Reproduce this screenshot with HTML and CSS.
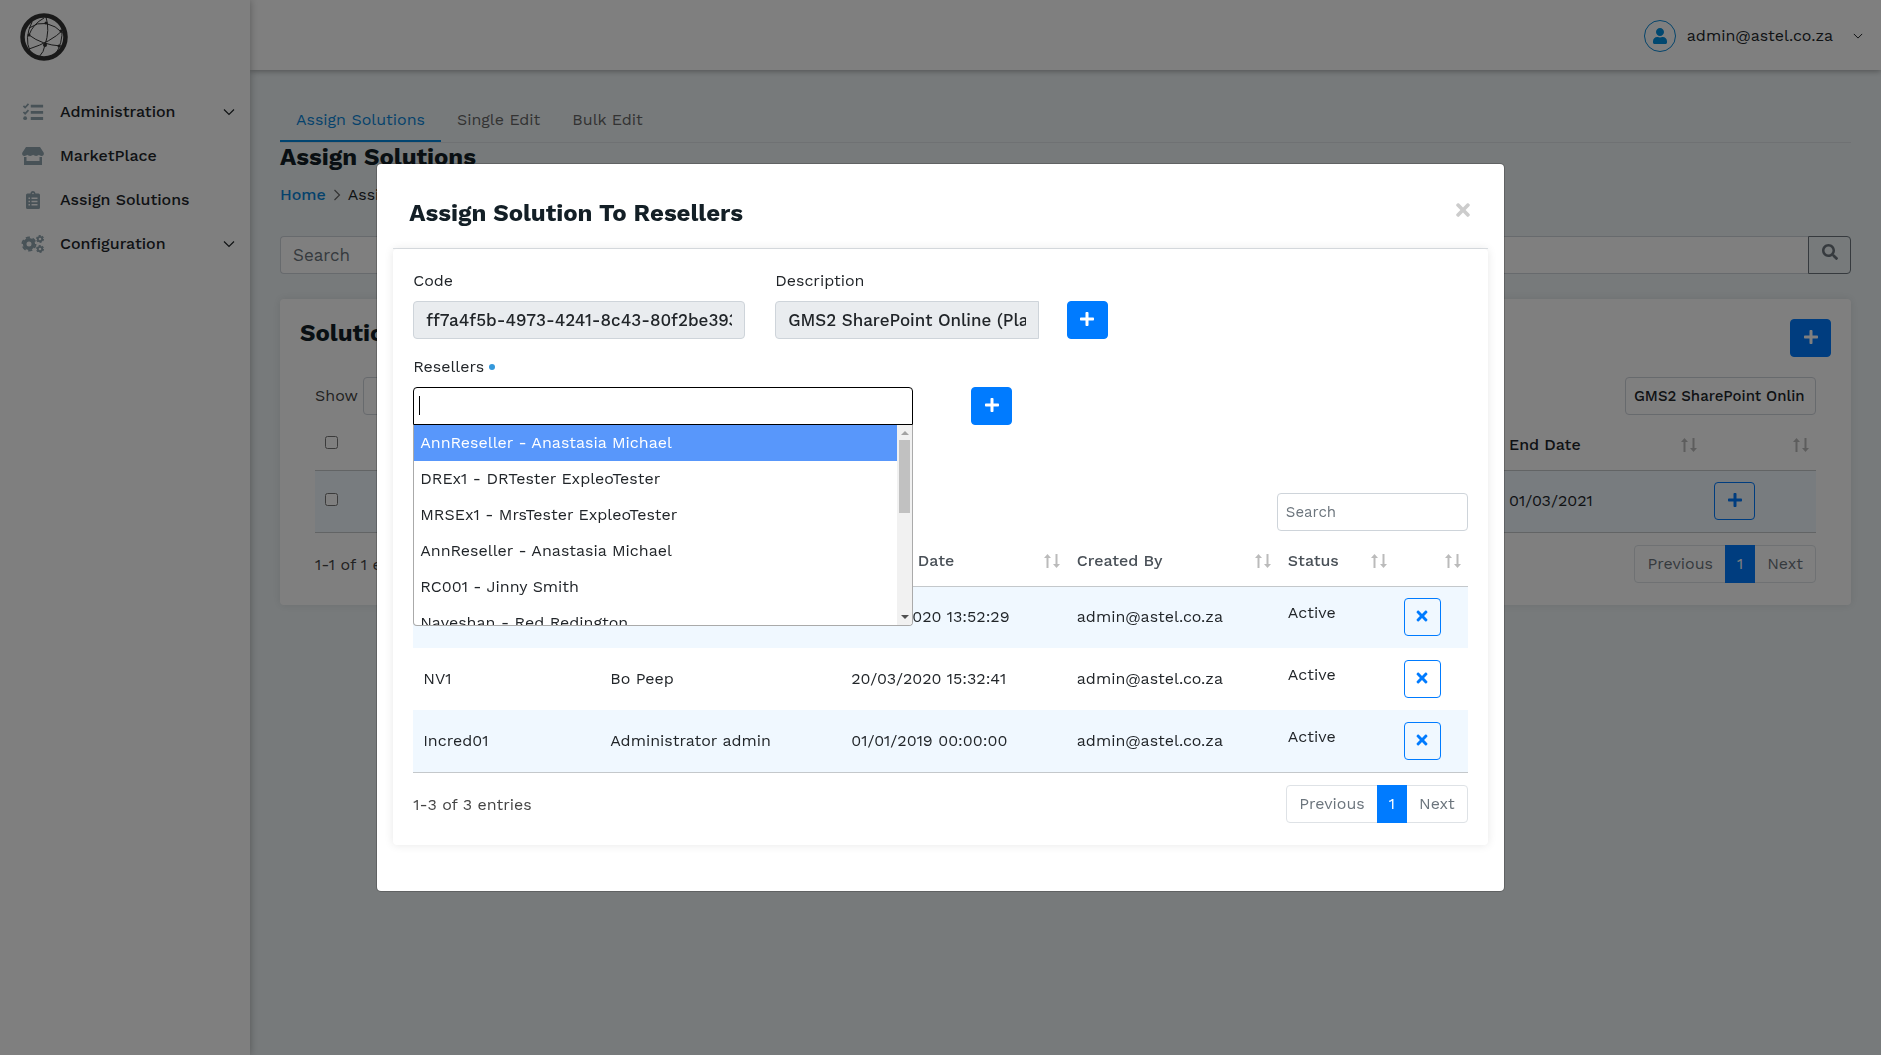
FILE: index.html
```html
<!DOCTYPE html>
<html lang="en">
<head>
<meta charset="utf-8">
<meta name="viewport" content="width=device-width, initial-scale=1">
<title>Assign Solutions</title>
<link rel="stylesheet" href="styles.css">
</head>
<body>
<svg class="sprite" aria-hidden="true">
  <symbol id="plus" viewBox="0 0 448 512"><path d="M416 208H272V64c0-17.67-14.33-32-32-32h-32c-17.67 0-32 14.33-32 32v144H32c-17.67 0-32 14.33-32 32v32c0 17.67 14.33 32 32 32h144v144c0 17.67 14.33 32 32 32h32c17.67 0 32-14.33 32-32V304h144c17.67 0 32-14.33 32-32v-32c0-17.67-14.33-32-32-32z"/></symbol>
  <symbol id="times" viewBox="0 0 352 512"><path d="M242.72 256l100.07-100.07c12.28-12.28 12.28-32.19 0-44.48l-22.24-22.24c-12.28-12.28-32.19-12.28-44.48 0L176 189.28 75.93 89.21c-12.28-12.28-32.19-12.28-44.48 0L9.21 111.45c-12.28 12.28-12.28 32.19 0 44.48L109.28 256 9.21 356.07c-12.28 12.28-12.28 32.19 0 44.48l22.24 22.24c12.28 12.28 32.2 12.28 44.48 0L176 322.72l100.07 100.07c12.28 12.28 32.2 12.28 44.48 0l22.24-22.24c12.28-12.28 12.28-32.19 0-44.48L242.72 256z"/></symbol>
  <symbol id="user" viewBox="0 0 448 512"><path d="M224 256c70.7 0 128-57.3 128-128S294.7 0 224 0 96 57.3 96 128s57.3 128 128 128zm89.6 32h-16.7c-22.2 10.2-46.9 16-72.9 16s-50.6-5.8-72.9-16h-16.7C60.2 288 0 348.2 0 422.4V464c0 26.5 21.5 48 48 48h352c26.5 0 48-21.5 48-48v-41.6c0-74.2-60.2-134.4-134.4-134.4z"/></symbol>
  <symbol id="search" viewBox="0 0 512 512"><path d="M505 442.7L405.3 343c-4.5-4.5-10.6-7-17-7H372c27.6-35.3 44-79.7 44-128C416 93.1 322.9 0 208 0S0 93.1 0 208s93.1 208 208 208c48.3 0 92.7-16.4 128-44v16.3c0 6.4 2.5 12.5 7 17l99.7 99.7c9.4 9.4 24.6 9.4 33.9 0l28.3-28.3c9.4-9.4 9.4-24.6.1-34zM208 336c-70.7 0-128-57.2-128-128 0-70.7 57.2-128 128-128 70.7 0 128 57.2 128 128 0 70.7-57.2 128-128 128z"/></symbol>
  <symbol id="chevron" viewBox="0 0 12 12"><path d="M1 3.500L6 8.500l5-5" fill="none" stroke="currentColor" stroke-width="1.200"/></symbol>
  <symbol id="sort" viewBox="0 0 16 14"><path d="M2.500 14V4H0L3.500 0 7 4H4.500v10zM11.500 0v10H9l3.500 4 3.500-4h-2.500V0z"/></symbol>
  <symbol id="tasks" viewBox="0 0 18 16"><path d="M7 1.500h11v2.500H7zM7 7h11v2.500H7zM7 12.500h11V15H7z"/><circle cx="2" cy="13.500" r="1.700"/><path d="M.5 2.500L2 4l3-3.200M.5 8L2 9.500l3-3.200" fill="none" stroke="currentColor" stroke-width="1.500"/></symbol>
  <symbol id="store" viewBox="0 0 22 18"><path d="M4 0h14l3.600 5.500c.9 1.800-.3 3.500-2.100 3.500-1.200 0-2-.5-2.600-1.200-.6.700-1.500 1.200-2.800 1.200-1.300 0-2.300-.5-3-1.200C10.400 8.500 9.400 9 8.200 9c-1.300 0-2.300-.5-2.900-1.200C4.600 8.500 3.700 9 2.500 9 .7 9-.5 7.300.4 5.500zM2 10h2.500v4h13v-4H20v8H2z"/></symbol>
  <symbol id="clipboard" viewBox="0 0 14 18"><path fill-rule="evenodd" d="M1.500 2.500h3a2.500 2.500 0 015 0h3A1.500 1.500 0 0114 4v12.500a1.500 1.500 0 01-1.500 1.500h-11A1.500 1.500 0 010 16.500V4a1.500 1.500 0 011.500-1.500zM7 1.700a.8.800 0 100 1.600.8.800 0 000-1.600zM2.500 6.500V8H4V6.500zm3 0V8h6V6.500zm-3 3.200v1.500H4V9.700zm3 0v1.500h6V9.700zm-3 3.300v1.500H4V13zm3 0v1.500h6V13z"/></symbol>
  <symbol id="cogs" viewBox="0 0 23 18"><g fill="none" stroke="currentColor"><circle cx="7.500" cy="9" r="4.300" stroke-width="3.600"/><circle cx="7.500" cy="9" r="6.600" stroke-width="1.800" stroke-dasharray="4.200 2.711"/><circle cx="18.500" cy="4" r="2.200" stroke-width="1.800"/><circle cx="18.500" cy="4" r="3.400" stroke-width="1.200" stroke-dasharray="2.100 1.460"/><circle cx="18.500" cy="14" r="2.200" stroke-width="1.800"/><circle cx="18.500" cy="14" r="3.400" stroke-width="1.200" stroke-dasharray="2.100 1.460"/></g></symbol>
</svg>

<div class="app">
  <aside class="sidebar">
    <a class="logo" href="#" aria-label="Home">
      <svg viewBox="0 0 48 48" stroke="currentColor"><circle cx="24" cy="24" r="21.500" stroke-width="4.500"/><path d="M9 15Q26 3 44 21M9 22Q22 32 41 33M26 4Q30 17 25 32Q24 39 19 44M9 36Q31 29 43 17M12 9Q4 25 10 38M42 15Q43 30 35 42M9 22Q13 11 24 5" stroke-width="1"/><g fill="currentColor" stroke="none"><circle cx="9" cy="22" r="1.500"/><circle cx="26" cy="10" r="1.500"/><circle cx="25" cy="32" r="2"/><circle cx="41" cy="18" r="1.500"/><circle cx="39" cy="33" r="1.500"/></g></svg>
    </a>
    <nav class="menu">
      <a class="menu-item" href="#"><svg class="menu-icon"><use href="#tasks"/></svg><span>Administration</span><svg class="chevron"><use href="#chevron"/></svg></a>
      <a class="menu-item" href="#"><svg class="menu-icon"><use href="#store"/></svg><span>MarketPlace</span></a>
      <a class="menu-item" href="#"><svg class="menu-icon"><use href="#clipboard"/></svg><span>Assign Solutions</span></a>
      <a class="menu-item" href="#"><svg class="menu-icon"><use href="#cogs"/></svg><span>Configuration</span><svg class="chevron"><use href="#chevron"/></svg></a>
    </nav>
  </aside>
  <div class="page">
    <header class="topbar">
      <button class="account" type="button"><span class="avatar"><svg><use href="#user"/></svg></span><span>admin@astel.co.za</span><svg class="chevron"><use href="#chevron"/></svg></button>
    </header>
    <main class="content">
      <nav class="tabs">
        <a class="tab tab-active" href="#">Assign Solutions</a>
        <a class="tab" href="#">Single Edit</a>
        <a class="tab" href="#">Bulk Edit</a>
      </nav>
      <h1 class="heading">Assign Solutions</h1>
      <nav class="breadcrumb" aria-label="Breadcrumb"><a href="#">Home</a><svg class="crumb-arrow"><use href="#chevron"/></svg><span>Assign Solutions</span></nav>
      <form class="search-bar">
        <input class="field" type="text" placeholder="Search" aria-label="Search">
        <button class="search-button" type="button" aria-label="Search"><svg><use href="#search"/></svg></button>
      </form>
      <section class="card">
        <div class="card-head"><h2 class="heading">Solutions</h2><button class="btn" type="button" aria-label="Add solution"><svg><use href="#plus"/></svg></button></div>
        <div class="card-body">
          <div class="table-tools">
            <label class="page-size">Show <select class="field"><option>10</option></select></label>
            <input class="field filter" type="text" value="GMS2 SharePoint Onlin" aria-label="Filter solutions">
          </div>
          <table class="table solutions">
            <colgroup><col class="s-check"><col><col class="s-end"><col class="s-action"></colgroup>
            <thead><tr><th><input type="checkbox" aria-label="Select all"></th><th></th><th><div class="th">End Date<svg class="sort"><use href="#sort"/></svg></div></th><th><div class="th"><svg class="sort"><use href="#sort"/></svg></div></th></tr></thead>
            <tbody><tr><td><input type="checkbox" aria-label="Select row"></td><td></td><td>01/03/2021</td><td><button class="btn btn-outline" type="button" aria-label="Assign"><svg><use href="#plus"/></svg></button></td></tr></tbody>
          </table>
          <div class="table-foot"><span class="entries">1-1 of 1 entries</span>
            <nav class="pager"><a href="#">Previous</a><a class="current" href="#">1</a><a href="#">Next</a></nav>
          </div>
        </div>
      </section>
    </main>
  </div>
</div>

<div class="backdrop">
  <div class="modal" role="dialog" aria-modal="true" aria-labelledby="modal-title">
    <div class="modal-head">
      <h2 class="heading" id="modal-title">Assign Solution To Resellers</h2>
      <button class="close" type="button" aria-label="Close"><svg><use href="#times"/></svg></button>
    </div>
    <div class="panel">
      <div class="form-row">
        <div class="form-group group-code"><label for="code">Code</label><input class="field" id="code" type="text" readonly value="ff7a4f5b-4973-4241-8c43-80f2be393a1c"></div>
        <div class="form-group group-description"><label for="description">Description</label><input class="field" id="description" type="text" readonly value="GMS2 SharePoint Online (Plan 1)"></div>
        <button class="btn" type="button" aria-label="Choose solution"><svg><use href="#plus"/></svg></button>
      </div>
      <div class="form-row row-resellers">
        <div class="form-group group-resellers">
          <label for="resellers">Resellers<span class="required"></span></label>
          <div class="combo">
            <input class="field" id="resellers" type="text" role="combobox" aria-expanded="true" aria-controls="reseller-list">
            <span class="caret"></span>
            <div class="dropdown">
              <ul class="options" id="reseller-list" role="listbox">
                <li class="highlighted" role="option" aria-selected="true">AnnReseller - Anastasia Michael</li>
                <li role="option">DREx1 - DRTester ExpleoTester</li>
                <li role="option">MRSEx1 - MrsTester ExpleoTester</li>
                <li role="option">AnnReseller - Anastasia Michael</li>
                <li role="option">RC001 - Jinny Smith</li>
                <li role="option">Naveshan - Red Redington</li>
              </ul>
              <div class="scrollbar"><span class="arrow-up"></span><span class="thumb"></span><span class="arrow-down"></span></div>
            </div>
          </div>
        </div>
        <button class="btn" type="button" aria-label="Add reseller"><svg><use href="#plus"/></svg></button>
      </div>
      <div class="table-tools tools-end"><input class="field filter" type="text" placeholder="Search" aria-label="Search resellers"></div>
      <table class="table resellers">
        <colgroup><col class="r-code"><col class="r-name"><col class="r-date"><col class="r-by"><col class="r-status"><col class="r-action"></colgroup>
        <thead><tr><th></th><th></th><th><div class="th">Created Date<svg class="sort"><use href="#sort"/></svg></div></th><th><div class="th">Created By<svg class="sort"><use href="#sort"/></svg></div></th><th><div class="th">Status<svg class="sort"><use href="#sort"/></svg></div></th><th><div class="th"><svg class="sort"><use href="#sort"/></svg></div></th></tr></thead>
        <tbody>
          <tr><td></td><td></td><td>20/03/2020 13:52:29</td><td>admin@astel.co.za</td><td class="status">Active</td><td><button class="btn btn-outline btn-remove" type="button" aria-label="Remove"><svg><use href="#times"/></svg></button></td></tr>
          <tr><td>NV1</td><td>Bo Peep</td><td>20/03/2020 15:32:41</td><td>admin@astel.co.za</td><td class="status">Active</td><td><button class="btn btn-outline btn-remove" type="button" aria-label="Remove"><svg><use href="#times"/></svg></button></td></tr>
          <tr><td>Incred01</td><td>Administrator admin</td><td>01/01/2019 00:00:00</td><td>admin@astel.co.za</td><td class="status">Active</td><td><button class="btn btn-outline btn-remove" type="button" aria-label="Remove"><svg><use href="#times"/></svg></button></td></tr>
        </tbody>
      </table>
      <div class="table-foot"><span class="entries">1-3 of 3 entries</span>
        <nav class="pager"><a href="#">Previous</a><a class="current" href="#">1</a><a href="#">Next</a></nav>
      </div>
    </div>
  </div>
</div>
</body>
</html>
```
FILE: styles.css
```css
* { box-sizing: border-box; }
body {
  margin: 0;
  font: 16px/24px "Work Sans", Inter, "Liberation Sans", sans-serif;
  color: #212529;
  background: #eff5f7;
}
a { color: inherit; text-decoration: none; }
svg { fill: currentColor; flex: none; }
button { font: inherit; cursor: pointer; }
.sprite { position: absolute; width: 0; height: 0; }
.heading { margin: 0; font-size: 24px; line-height: 28px; font-weight: 700; color: #131f26; }
.chevron { width: 12px; height: 12px; }

/* Shell */
.app { display: flex; min-height: 100vh; }
.sidebar { width: 250px; flex: none; background: #fff; box-shadow: 0 0 8px rgba(0, 0, 0, .3); z-index: 1; }
.page { flex: 1; min-width: 0; }
.logo { display: block; padding: 13px 0 0 20px; height: 90px; color: #333; }
.logo svg { width: 48px; height: 48px; fill: none; }
.menu-item { display: flex; align-items: center; height: 44px; padding: 0 15px 0 20px; font-weight: 500; }
.menu-icon { width: 26px; height: 18px; margin-right: 14px; color: #90a4ae; }
.menu-item .chevron { margin-left: auto; }
.topbar { display: flex; justify-content: flex-end; align-items: center; height: 70px; padding: 2px 18px 0; background: #fff; box-shadow: 0 1px 6px rgba(0, 0, 0, .35); }
.account { display: flex; align-items: center; padding: 0; border: 0; background: none; color: inherit; }
.account .chevron { width: 10px; height: 10px; margin-left: 20px; }
.avatar { display: grid; place-items: center; width: 32px; height: 32px; margin-right: 11px; border: 1px solid #0a8ad8; border-radius: 50%; color: #0090e0; }
.avatar svg { width: 14px; height: 16px; }

/* Page content */
.content { padding: 29px 30px; }
.tabs { display: flex; height: 44px; border-bottom: 1px solid #dee2e6; }
.tab { height: 43px; padding: 9px 16px; color: #666; }
.tab-active { color: #0a85d8; border-bottom: 2px solid #0088e0; }
.breadcrumb { display: flex; align-items: center; gap: 5px; margin: 12px 0 29px; }
.breadcrumb a { color: #0a85d8; font-weight: 500; }
.crumb-arrow { width: 12px; height: 12px; transform: rotate(-90deg); color: #666; }
.field { height: 38px; min-width: 0; padding: 0 12px; border: 1px solid #ced4da; border-radius: 4px; background: #fff; font: 500 17px/24px "Work Sans", Inter, "Liberation Sans", sans-serif; color: #212529; }
.field::placeholder { color: #6c757d; opacity: 1; font-weight: 400; }
.search-bar { display: flex; margin-bottom: 25px; }
.search-bar .field { flex: 1; border-right: 0; border-radius: 4px 0 0 4px; }
.search-button { width: 43px; padding: 0; border: 1px solid #6c757d; border-radius: 0 4px 4px 0; background: none; color: #6c757d; }
.search-button svg { width: 16px; height: 16px; }
.card, .panel { background: #fff; border-radius: 4px; box-shadow: 0 0 10px rgba(0, 0, 0, .1); }
.card { padding: 20px 20px 22px; }
.card-head { display: flex; justify-content: space-between; align-items: flex-start; margin-bottom: 20px; }
.card-body { padding: 0 15px; }
.btn { display: grid; place-items: center; flex: none; width: 41px; height: 38px; padding: 0 0 2px; border: 1px solid #007bff; border-radius: 4px; background: #007bff; color: #fff; }
.btn svg { width: 14px; height: 16px; }
.btn-outline { background: none; color: #007bff; }
.btn-remove { width: 37px; }

/* Tables */
.table-tools { display: flex; justify-content: space-between; color: #444; }
.tools-end { justify-content: flex-end; }
.page-size { display: flex; align-items: center; gap: 5px; }
.page-size select { width: 76px; }
.filter { width: 191px; padding: 0 8px; font-size: 15px; }
.table { width: 100%; border-collapse: collapse; table-layout: fixed; border-bottom: 1px solid #c4c8cb; }
.table th { height: 55px; padding: 5px 10px 0; text-align: left; font-weight: 500; border-bottom: 1px solid #c4c8cb; }
.table td { height: 62px; padding: 0 10px; }
.table tbody tr:nth-child(odd) { background: #f0f8ff; }
.table input[type="checkbox"] { display: block; width: 13px; height: 13px; margin: 0 0 4px; }
.th { display: flex; align-items: center; }
.sort { width: 16px; height: 14px; margin-left: auto; color: #bbb; }
.solutions th { color: #212529; }
.solutions .sort { margin-right: -3px; }
.s-check { width: 40px; }
.s-end { width: 205px; }
.s-action { width: 112px; }
.resellers { color: #212529; }
.resellers th { color: #495057; }
.resellers .sort { margin-right: -3px; }
.r-code { width: 187px; }
.r-name { width: 241px; }
.r-by { width: 211px; }
.r-status { width: 116px; }
.r-action { width: 74px; }
.table .status { padding-bottom: 8px; }
.table-foot { display: flex; justify-content: space-between; align-items: center; margin-top: 12px; color: #444; }
.entries { padding-top: 2px; }
.pager { display: flex; height: 38px; border: 1px solid #dee2e6; border-radius: 4px; color: #6c757d; }
.pager a { padding: 6px 12px; }
.pager .current { margin: -1px 0; padding: 7px 12px; background: #007bff; color: #fff; }

/* Modal */
.backdrop { position: fixed; inset: 0; overflow: auto; padding-top: 163px; background: rgba(0, 0, 0, .5); z-index: 10; }
.modal { width: 60%; min-width: 900px; margin: 0 auto; padding: 0 16px 46px; border: 1px solid rgba(0, 0, 0, .2); border-radius: 5px; background: #fff; background-clip: padding-box; }
.modal-head { display: flex; justify-content: space-between; align-items: flex-start; padding: 35px 15px 21px 16px; border-bottom: 1px solid #dee2e6; }
.close { display: grid; place-items: center; width: 20px; height: 22px; padding: 0; border: 0; background: none; color: #ccc; }
.close svg { width: 14px; height: 20px; }
.panel { padding: 20px 20px 22px; }
.form-row { display: flex; align-items: flex-end; }
.form-group { display: flex; flex-direction: column; gap: 8px; }
.form-group .field { width: 100%; }
.form-group label { display: flex; align-items: center; gap: 5px; }
.group-code { width: 31%; flex: 1 1 auto; max-width: 332px; margin-right: 30px; }
.group-description { width: 25%; margin-right: 28px; }
.group-description .field { border-radius: 4px 0 0 4px; }
.field[readonly] { background: #e9ecef; }
.required { width: 6px; height: 6px; border-radius: 50%; background: #3498db; }
.row-resellers { margin: 16px 0 68px; }
.group-resellers { width: 47.4%; margin-right: 58px; }
.combo { position: relative; }
.combo .field { display: block; border-color: #000; border-radius: 4px 4px 0 0; outline: 0; }
.caret { position: absolute; left: 6px; top: 9px; width: 1px; height: 19px; background: #000; }
.dropdown { position: absolute; left: 0; right: 0; top: 100%; display: flex; height: 201px; border: 1px solid #aaa; border-top: 0; border-radius: 0 0 4px 4px; background: #fff; overflow: hidden; z-index: 2; }
.options { flex: 1; margin: 0; padding: 0; list-style: none; }
.options li { height: 36px; padding: 6px; }
.options .highlighted { background: #5897fb; color: #fff; }
.scrollbar { display: flex; flex-direction: column; align-items: center; width: 15px; padding: 6px 0; background: #f1f1f1; }
.thumb { width: 11px; height: 73px; margin-top: 5px; background: #c1c1c1; }
.arrow-up, .arrow-down { border: 4px solid transparent; border-top: 0; border-bottom-color: #a3a3a3; }
.arrow-down { margin-top: auto; border-top: 4px solid #505050; border-bottom: 0; }
```
